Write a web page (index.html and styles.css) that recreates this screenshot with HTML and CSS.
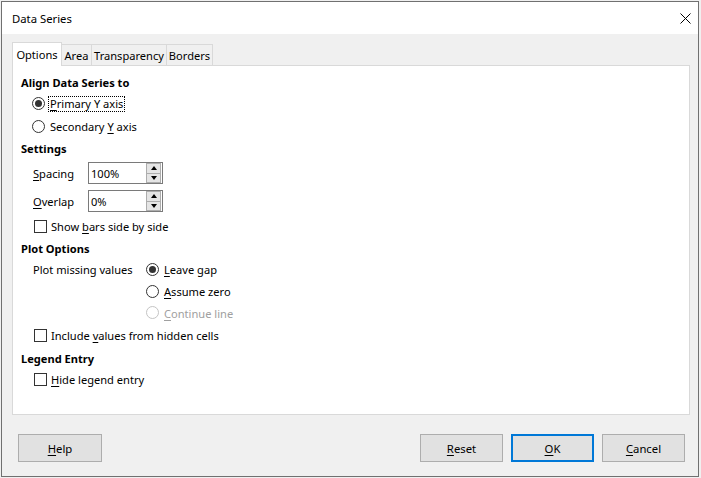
FILE: index.html
```html
<!DOCTYPE html>
<html>
<head>
<meta charset="utf-8">
<link rel="stylesheet" href="styles.css">
</head>
<body>
<div class="window">
  <div class="titlebar">
    <span class="title">Data Series</span>
    <svg class="close" width="11" height="11" viewBox="0 0 11 11"><path d="M0.5 0.5 L10.5 10.5 M10.5 0.5 L0.5 10.5" stroke="#000" stroke-width="1" fill="none"/></svg>
  </div>
  <div class="body">
    <div class="tabs">
      <div class="tab active t-options">Options</div>
      <div class="tab t-area">Area</div>
      <div class="tab t-transp">Transparency</div>
      <div class="tab t-borders">Borders</div>
    </div>
    <div class="panel">
      <div class="heading h1">Align Data Series to</div>
      <div class="row radio-row r-primary"><span class="radio checked"></span><span class="focus"><u>P</u>rimary Y axis</span></div>
      <div class="row radio-row r-secondary"><span class="radio"></span><span class="lbl">Secondary <u>Y</u> axis</span></div>
      <div class="heading h2">Settings</div>
      <div class="row spin-row s1"><span class="spin-lbl"><u>S</u>pacing</span><div class="spin"><span class="spin-val">100%</span><div class="spin-btns"><span class="sb up"></span><span class="sb down"></span></div></div></div>
      <div class="row spin-row s2"><span class="spin-lbl"><u>O</u>verlap</span><div class="spin"><span class="spin-val">0%</span><div class="spin-btns"><span class="sb up"></span><span class="sb down"></span></div></div></div>
      <div class="row check-row c1"><span class="check"></span><span class="lbl">Show <u>b</u>ars side by side</span></div>
      <div class="heading h3">Plot Options</div>
      <div class="plot-missing">
        <span class="pm-lbl">Plot missing values</span>
        <div class="pm-group">
          <div class="row radio-row pm1"><span class="radio checked"></span><span class="lbl"><u>L</u>eave gap</span></div>
          <div class="row radio-row pm2"><span class="radio"></span><span class="lbl"><u>A</u>ssume zero</span></div>
          <div class="row radio-row pm3 disabled"><span class="radio"></span><span class="lbl"><u>C</u>ontinue line</span></div>
        </div>
      </div>
      <div class="row check-row c2"><span class="check"></span><span class="lbl">Include <u>v</u>alues from hidden cells</span></div>
      <div class="heading h4">Legend Entry</div>
      <div class="row check-row c3"><span class="check"></span><span class="lbl"><u>H</u>ide legend entry</span></div>
    </div>
    <div class="buttons">
      <button class="btn"><u>H</u>elp</button>
      <div class="spacer"></div>
      <button class="btn"><u>R</u>eset</button>
      <button class="btn default"><u>O</u>K</button>
      <button class="btn"><u>C</u>ancel</button>
    </div>
  </div>
</div>
</body>
</html>
```

FILE: styles.css
```css
* { box-sizing: border-box; }
html, body { margin: 0; }
body {
  background: #f0f0f0;
  font-family: "Noto Sans", "Open Sans", sans-serif;
  font-size: 11.1px;
  color: #000;
  padding: 1px 0 0 1px;
  width: 701px;
  height: 478px;
  overflow: hidden;
}
u { text-decoration-thickness: 1px; text-underline-offset: 2px; }
.window {
  width: 698px;
  height: 476px;
  border: 1px solid #707070;
  background: #f0f0f0;
  display: flex;
  flex-direction: column;
}
.titlebar {
  height: 32px;
  background: #fff;
  display: flex;
  align-items: center;
  justify-content: space-between;
  padding: 2px 7px 0 10px;
  flex: none;
}
.title { line-height: 16px; font-size: 11.3px; }
.close { display: block; margin-top: -2px; }
.body {
  padding: 8px 7px 0 10px;
  flex: 1;
  display: flex;
  flex-direction: column;
}
.tabs {
  display: flex;
  align-items: flex-end;
  height: 23px;
  position: relative;
  z-index: 1;
}
.tab {
  height: 21px;
  background: #f0f0f0;
  border-top: 1px solid #d9d9d9;
  border-right: 1px solid #d9d9d9;
  text-align: center;
  line-height: 21px;
  white-space: nowrap;
}
.tab.active {
  height: 24px;
  margin-bottom: -1px;
  background: #fff;
  border-left: 1px solid #d9d9d9;
  line-height: 24px;
}
.t-options { width: 50px; }
.t-area { width: 30px; }
.t-transp { width: 75px; }
.t-borders { width: 46px; }
.panel {
  width: 678px;
  height: 350px;
  background: #fff;
  border: 1px solid #d9d9d9;
  padding: 8px 8px 0 8px;
  display: flex;
  flex-direction: column;
}
.heading {
  height: 18px;
  line-height: 18px;
  font-weight: bold;
  flex: none;
}
.h2 { padding-top: 1px; margin-top: 2px; }
.h3 { padding-top: 2px; margin-top: 1px; }
.h4 { padding-top: 2px; margin-top: 2px; }
.row { display: flex; align-items: center; white-space: nowrap; flex: none; }
.radio-row { height: 23px; padding-left: 11px; padding-top: 1px; }
.r-secondary { height: 22px; }
.radio {
  width: 13px;
  height: 13px;
  border: 1px solid #333;
  border-radius: 50%;
  background: #fff;
  flex: none;
  display: flex;
  align-items: center;
  justify-content: center;
  margin-right: 4px;
  margin-top: -1px;
}
.radio.checked::after {
  content: "";
  width: 7px;
  height: 7px;
  border-radius: 50%;
  background: #333;
}
.focus {
  outline: 1px dotted #000;
  outline-offset: 0;
  padding: 0 1px;
  line-height: 14px;
}
.lbl { padding-left: 1px; }
.spin-row { height: 24px; padding-left: 12px; }
.s1 { margin-top: 4px; }
.s2 { margin-top: 4px; }
.spin-lbl { width: 55px; }
.spin {
  width: 75px;
  height: 22px;
  border: 1px solid #7a7a7a;
  background: #fff;
  display: flex;
  align-items: center;
  padding: 0 1px 0 2px;
}
.spin-val { flex: 1; }
.spin-btns {
  width: 15px;
  height: 20px;
  display: flex;
  flex-direction: column;
}
.sb {
  flex: 1;
  border: 1px solid #adadad;
  background: #e5e5e5;
  display: flex;
  align-items: center;
  justify-content: center;
}
.sb.down { border-top: none; }
.sb.up::after {
  content: "";
  border-left: 3px solid transparent;
  border-right: 3px solid transparent;
  border-bottom: 4px solid #000;
}
.sb.down::after {
  content: "";
  border-left: 3px solid transparent;
  border-right: 3px solid transparent;
  border-top: 4px solid #000;
}
.check-row { height: 22px; padding-left: 13px; padding-top: 1px; }
.check {
  width: 13px;
  height: 13px;
  border: 1px solid #333;
  background: #fff;
  flex: none;
  margin-right: 3px;
  margin-top: -1px;
}
.c1 { margin-top: 2px; }
.plot-missing { display: flex; margin-top: 2px; padding-left: 12px; flex: none; }
.pm-lbl { width: 113px; height: 22px; line-height: 23px; }
.pm-group .radio-row { padding-left: 0; height: 22px; }
.pm-group .pm3 { height: 21px; }
.disabled { color: #a0a0a0; }
.disabled .radio { border-color: #c4c4c4; }
.c2 { margin-top: 1px; }
.c3 { margin-top: 2px; }
.buttons {
  display: flex;
  margin-top: 19px;
  padding: 0 5px 0 6px;
  width: 678px;
  gap: 8px;
}
.spacer { flex: 1; }
.btn {
  width: 83px;
  height: 28px;
  border: 1px solid #adadad;
  background: #e1e1e1;
  font-family: inherit;
  font-size: 11.3px;
  color: #000;
  padding: 1px 0 0 0;
}
.btn:first-child { width: 84px; }
.btn.default { border: 2px solid #0078d7; }
```
